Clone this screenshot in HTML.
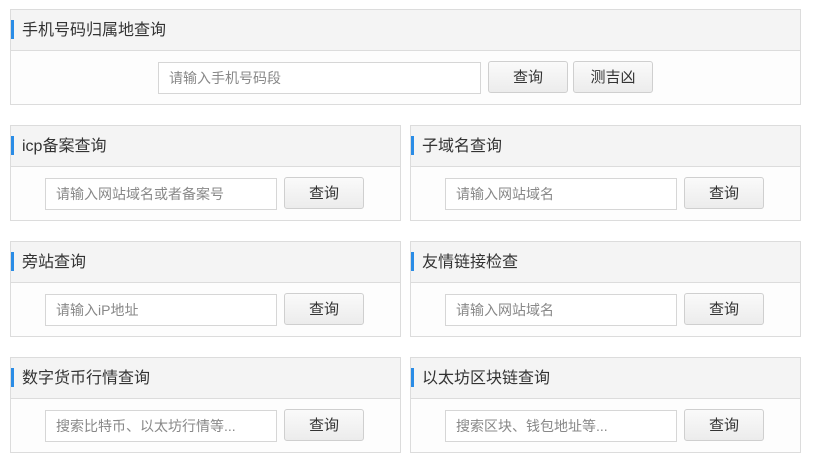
<!DOCTYPE html>
<html><head><meta charset="utf-8"><style>
*{box-sizing:border-box;margin:0;padding:0}
body{width:828px;height:469px;background:#fff;font-family:"Liberation Sans","Noto Sans CJK SC",sans-serif;position:relative;overflow:hidden}
.box{position:absolute;border:1px solid #dcdcdc;background:#fdfdfd}
.hd{height:41px;background:#f4f4f4;border-bottom:1px solid #dcdcdc;position:relative;font-size:16px;color:#333;line-height:42px;padding-left:11px}
.hd:before{content:"";position:absolute;left:0;top:10px;width:3px;height:19px;background:#2a8ce6}
.in{position:absolute;height:32px;border:1px solid #d6d6d6;background:#fff;font-size:14px;color:#888;line-height:31px;padding-left:10px}
.bt{position:absolute;height:32px;width:80px;border:1px solid #cfcfcf;border-radius:3px;background:linear-gradient(#fafafa,#ececec);font-size:15px;color:#333;text-align:center;line-height:32px}
</style></head><body>
<div class="box" style="left:10px;top:9px;width:791px;height:96px"><div class="hd">手机号码归属地查询</div>
<div class="in" style="left:147px;top:52px;width:323px">请输入手机号码段</div>
<div class="bt" style="left:477px;top:51px">查询</div>
<div class="bt" style="left:562px;top:51px">测吉凶</div></div>

<div class="box" style="left:10px;top:125px;width:391px;height:96px"><div class="hd">icp备案查询</div>
<div class="in" style="left:34px;top:52px;width:232px">请输入网站域名或者备案号</div>
<div class="bt" style="left:273px;top:51px">查询</div></div>
<div class="box" style="left:410px;top:125px;width:391px;height:96px"><div class="hd">子域名查询</div>
<div class="in" style="left:34px;top:52px;width:232px">请输入网站域名</div>
<div class="bt" style="left:273px;top:51px">查询</div></div>

<div class="box" style="left:10px;top:241px;width:391px;height:96px"><div class="hd">旁站查询</div>
<div class="in" style="left:34px;top:52px;width:232px">请输入iP地址</div>
<div class="bt" style="left:273px;top:51px">查询</div></div>
<div class="box" style="left:410px;top:241px;width:391px;height:96px"><div class="hd">友情链接检查</div>
<div class="in" style="left:34px;top:52px;width:232px">请输入网站域名</div>
<div class="bt" style="left:273px;top:51px">查询</div></div>

<div class="box" style="left:10px;top:357px;width:391px;height:96px"><div class="hd">数字货币行情查询</div>
<div class="in" style="left:34px;top:52px;width:232px">搜索比特币、以太坊行情等...</div>
<div class="bt" style="left:273px;top:51px">查询</div></div>
<div class="box" style="left:410px;top:357px;width:391px;height:96px"><div class="hd">以太坊区块链查询</div>
<div class="in" style="left:34px;top:52px;width:232px">搜索区块、钱包地址等...</div>
<div class="bt" style="left:273px;top:51px">查询</div></div>
</body></html>
